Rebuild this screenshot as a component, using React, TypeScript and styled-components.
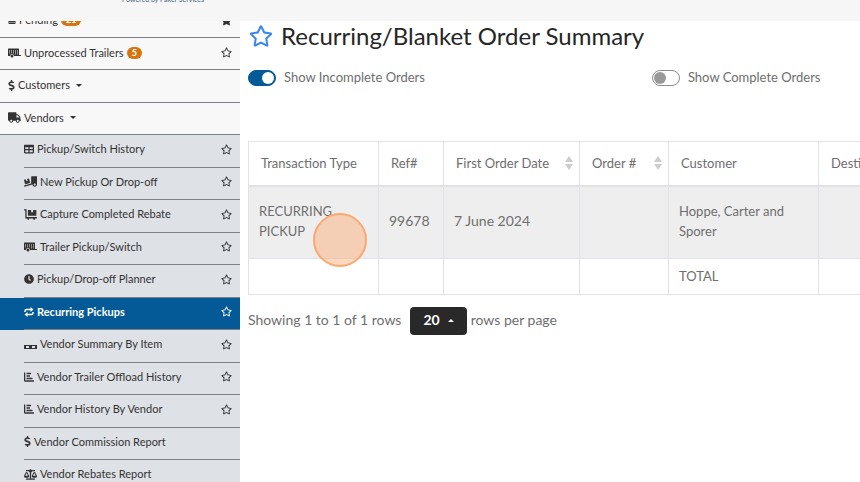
import React from 'react';
import styled, { createGlobalStyle, css } from 'styled-components';
import {
  FaBalanceScale,
  FaCalendarAlt,
  FaClock,
  FaDollarSign,
  FaDollyFlatbed,
  FaRegStar,
  FaStar,
  FaTable,
  FaTruck,
  FaTruckLoading,
} from 'react-icons/fa';

const GlobalStyle = createGlobalStyle`
  *, *::before, *::after { box-sizing: border-box; }
  body {
    margin: 0;
    background: #fff;
    color: #6e6e6e;
    font-family: Lato, "Liberation Sans", sans-serif;
    font-size: 14px;
    line-height: 20px;
  }
`;

const Page = styled.div`
  display: flex;
  flex-direction: column;
  height: 100vh;
  overflow: hidden;
`;

const TopBar = styled.header`
  flex: none;
  display: flex;
  align-items: flex-end;
  height: 21px;
  padding: 0 0 18px 122px;
  overflow: hidden;
  background: #f6f6f6;
`;

const Tagline = styled.span`
  color: #3c5a86;
  font-size: 7px;
  line-height: 8px;
`;

const Body = styled.div`
  flex: 1;
  display: flex;
  min-height: 0;
`;

const Sidebar = styled.nav`
  flex: none;
  width: 240px;
  overflow: hidden;
  background: #f8f8f8;
`;

const MenuList = styled.ul`
  margin: -16px 0 0;
  padding: 0;
  list-style: none;
`;

const SubMenu = styled.ul`
  margin: 0;
  padding: 0;
  list-style: none;
  background: #dee1e6;
`;

const MenuItem = styled.li<{ $nested?: boolean; $active?: boolean }>`
  display: flex;
  height: 32px;
  padding-left: ${(p) => (p.$nested ? 24 : 0)}px;
  color: #333;

  &:nth-child(odd) {
    height: 33px;
  }

  ${(p) =>
    p.$active &&
    css`
      background: #035a96;
      color: #fff;
      font-weight: 700;
    `}
`;

const MenuRow = styled.div<{ $nested?: boolean }>`
  flex: 1;
  display: flex;
  align-items: center;
  justify-content: space-between;
  padding: ${(p) => (p.$nested ? '0 8px 4px 0' : '0 8px 2px 8px')};
  border-bottom: 1px solid #7d8084;
`;

const MenuLink = styled.a`
  display: flex;
  align-items: center;
  gap: 3px;
  color: inherit;
  font-size: 11px;
  line-height: 16px;
  text-decoration: none;
  white-space: nowrap;

  svg {
    flex: none;
  }
`;

const DollarIcon = styled(FaDollarSign)`
  width: 7px;
  height: 11px;
`;

const Badge = styled.span`
  padding: 0 5px;
  border-radius: 6px;
  background: #d6750f;
  color: #fff;
  font-size: 9px;
  font-weight: 700;
  line-height: 12px;
`;

const Caret = styled.span<{ $up?: boolean }>`
  margin-left: 3px;
  border: 3px solid transparent;
  ${(p) =>
    p.$up
      ? css`
          border-top-width: 0;
          border-bottom-color: currentColor;
        `
      : css`
          border-bottom-width: 0;
          border-top-color: currentColor;
        `}
`;

const StarButton = styled.button<{ $large?: boolean }>`
  display: flex;
  padding: 0;
  border: 0;
  background: none;
  color: ${(p) => (p.$large ? '#3d86ec' : 'inherit')};
  font-size: ${(p) => (p.$large ? 24 : 11)}px;
  cursor: pointer;
`;

const Main = styled.main`
  flex: 1;
  min-width: 0;
  padding-left: 8px;
  overflow: hidden;
`;

const TitleRow = styled.div`
  display: flex;
  align-items: center;
  gap: 8px;
  height: 32px;
  padding: 0 0 2px 1px;
`;

const Title = styled.h1`
  margin: 0;
  color: #262626;
  font-size: 24px;
  font-weight: 400;
  line-height: 30px;
`;

const Filters = styled.div`
  display: grid;
  grid-template-columns: 66% 1fr;
  margin: 14px 0 53px;
`;

const SwitchLabel = styled.label`
  display: flex;
  align-items: center;
  gap: 8px;
  font-size: 13px;
`;

const Switch = styled.input`
  appearance: none;
  display: flex;
  align-items: center;
  width: 28px;
  height: 16px;
  margin: 0;
  padding: 0 1px;
  border: 1px solid #8c8c8c;
  border-radius: 8px;
  background: #fff;

  &::before {
    content: '';
    width: 12px;
    height: 12px;
    border-radius: 50%;
    background: #999;
  }

  &:checked {
    justify-content: flex-end;
    border-color: #035a96;
    background: #035a96;
  }

  &:checked::before {
    background: #fff;
  }
`;

const SwitchText = styled.span`
  padding-bottom: 1px;
`;

const TableScroller = styled.div`
  overflow: hidden;
`;

const OrdersTable = styled.table`
  width: 720px;
  table-layout: fixed;
  border-collapse: collapse;
`;

const Column = styled.col<{ $width: number }>`
  width: ${(p) => p.$width}px;
`;

const HeadCell = styled.th`
  height: 44px;
  padding: 0 12px 1px;
  border: 1px solid #dfe2e6;
  border-bottom-width: 2px;
  font-size: 13px;
  font-weight: 400;
  text-align: left;
  white-space: nowrap;
`;

const HeadContent = styled.div`
  display: flex;
  align-items: center;
  justify-content: space-between;
  margin-right: -6px;
`;

const SortIcon = styled.svg`
  flex: none;
  width: 8px;
  height: 14px;
  fill: #cdcdcd;
`;

const BodyRow = styled.tr<{ $shaded?: boolean }>`
  height: ${(p) => (p.$shaded ? 73 : 36)}px;
  background: ${(p) => (p.$shaded ? '#eeeeee' : '#fff')};
`;

const Cell = styled.td<{ $numeric?: boolean }>`
  position: relative;
  padding: 0 10px 2px;
  border: 1px solid #dfe2e6;
  font-size: ${(p) => (p.$numeric ? 14 : 13)}px;
`;

const ClickMarker = styled.span`
  position: absolute;
  top: 26px;
  left: 64px;
  z-index: 1;
  width: 54px;
  height: 54px;
  border: 2px solid #fba870;
  border-radius: 50%;
  background: rgba(251, 168, 112, 0.45);
`;

const Pagination = styled.div`
  display: flex;
  align-items: center;
  gap: 4px;
  margin-top: 12px;
`;

const PageText = styled.span`
  padding-bottom: 2px;
`;

const PageSize = styled.button`
  display: flex;
  align-items: center;
  gap: 5px;
  height: 28px;
  margin-left: 5px;
  padding: 0 13px 2px;
  border: 0;
  border-radius: 4px;
  background: #292929;
  color: #fff;
  font: inherit;
  font-weight: 700;
`;

function TrailerIcon() {
  return (
    <svg width="13" height="10" viewBox="0 0 26 20" fill="currentColor" aria-hidden="true">
      <path
        fillRule="evenodd"
        d="M1 1h20q1 0 1 1v12h4v2H12a4 4 0 0 0-8 0H1q-1 0-1-1V2q0-1 1-1zM3 4v7h1V4zM7 4v7h1V4zM11 4v7h1V4zM15 4v9h1V4zM19 4v9h1V4z"
      />
      <circle cx="8" cy="16" r="3" />
    </svg>
  );
}

function RepeatIcon() {
  return (
    <svg width="10" height="10" viewBox="0 0 20 20" fill="none" stroke="currentColor" aria-hidden="true">
      <path d="M2 10V8q0-3 3-3h9M18 10v2q0 3-3 3H6" strokeWidth="3" />
      <path d="M13 0l6 5-6 5zM7 10l-6 5 6 5z" fill="currentColor" stroke="none" />
    </svg>
  );
}

function PalletIcon() {
  return (
    <svg width="13" height="12" viewBox="0 0 13 12" fill="currentColor" aria-hidden="true">
      <path d="M0 7h13v1H0zM0 10h13v1H0zM0 8h2v2H0zM5 8h3v2H5zM11 8h2v2h-2z" />
    </svg>
  );
}

function BarsIcon() {
  return (
    <svg width="10" height="10" viewBox="0 0 20 20" fill="none" stroke="currentColor" aria-hidden="true">
      <path d="M1 1v15q0 2 2 2h17" strokeWidth="3" />
      <path d="M5 3h9M5 8h7M5 13h12" strokeWidth="3" />
    </svg>
  );
}

type Item = {
  label: string;
  icon: React.ReactNode;
  starred?: 'outline' | 'solid';
  badge?: string;
  caret?: boolean;
  active?: boolean;
};

const topItems: Item[] = [
  { label: 'Pending', icon: <FaCalendarAlt size={8} />, badge: '21', starred: 'solid' },
  { label: 'Unprocessed Trailers', icon: <TrailerIcon />, badge: '5', starred: 'outline' },
  { label: 'Customers', icon: <DollarIcon />, caret: true },
  { label: 'Vendors', icon: <FaTruck size={13} />, caret: true },
];

const vendorItems: Item[] = [
  { label: 'Pickup/Switch History', icon: <FaTable size={10} />, starred: 'outline' },
  { label: 'New Pickup Or Drop-off', icon: <FaTruckLoading size={13} />, starred: 'outline' },
  { label: 'Capture Completed Rebate', icon: <FaDollyFlatbed size={13} />, starred: 'outline' },
  { label: 'Trailer Pickup/Switch', icon: <TrailerIcon />, starred: 'outline' },
  { label: 'Pickup/Drop-off Planner', icon: <FaClock size={10} />, starred: 'outline' },
  { label: 'Recurring Pickups', icon: <RepeatIcon />, starred: 'outline', active: true },
  { label: 'Vendor Summary By Item', icon: <PalletIcon />, starred: 'outline' },
  { label: 'Vendor Trailer Offload History', icon: <BarsIcon />, starred: 'outline' },
  { label: 'Vendor History By Vendor', icon: <BarsIcon />, starred: 'outline' },
  { label: 'Vendor Commission Report', icon: <DollarIcon /> },
  { label: 'Vendor Rebates Report', icon: <FaBalanceScale size={13} /> },
];

function MenuEntry({ item, nested }: { item: Item; nested?: boolean }) {
  return (
    <MenuItem $nested={nested} $active={item.active}>
      <MenuRow $nested={nested}>
        <MenuLink href="#" aria-current={item.active ? 'page' : undefined}>
          {item.icon}
          {item.label}
          {item.badge && <Badge>{item.badge}</Badge>}
          {item.caret && <Caret />}
        </MenuLink>
        {item.starred && (
          <StarButton type="button" aria-label={`Favorite ${item.label}`}>
            {item.starred === 'solid' ? <FaStar /> : <FaRegStar />}
          </StarButton>
        )}
      </MenuRow>
    </MenuItem>
  );
}

const columns = [
  { label: 'Transaction Type', width: 130 },
  { label: 'Ref#', width: 65 },
  { label: 'First Order Date', width: 136, sortable: true },
  { label: 'Order #', width: 89, sortable: true },
  { label: 'Customer', width: 150 },
  { label: 'Destination', width: 150 },
];

export default function App() {
  return (
    <Page>
      <GlobalStyle />
      <TopBar>
        <Tagline>Powered by Paker Services</Tagline>
      </TopBar>
      <Body>
        <Sidebar>
          <MenuList>
            {topItems.map((item) => (
              <MenuEntry key={item.label} item={item} />
            ))}
          </MenuList>
          <SubMenu>
            {vendorItems.map((item) => (
              <MenuEntry key={item.label} item={item} nested />
            ))}
          </SubMenu>
        </Sidebar>
        <Main>
          <TitleRow>
            <StarButton type="button" $large aria-label="Favorite this page">
              <FaRegStar />
            </StarButton>
            <Title>Recurring/Blanket Order Summary</Title>
          </TitleRow>
          <Filters>
            <SwitchLabel>
              <Switch type="checkbox" role="switch" defaultChecked />
              <SwitchText>Show Incomplete Orders</SwitchText>
            </SwitchLabel>
            <SwitchLabel>
              <Switch type="checkbox" role="switch" />
              <SwitchText>Show Complete Orders</SwitchText>
            </SwitchLabel>
          </Filters>
          <TableScroller>
            <OrdersTable>
              <colgroup>
                {columns.map((c) => (
                  <Column key={c.label} $width={c.width} />
                ))}
              </colgroup>
              <thead>
                <tr>
                  {columns.map((c) => (
                    <HeadCell key={c.label} scope="col">
                      <HeadContent>
                        {c.label}
                        {c.sortable && (
                          <SortIcon viewBox="0 0 8 14" aria-hidden="true">
                            <path d="M4 0l4 6H0zM4 14l4-6H0z" />
                          </SortIcon>
                        )}
                      </HeadContent>
                    </HeadCell>
                  ))}
                </tr>
              </thead>
              <tbody>
                <BodyRow $shaded>
                  <Cell>
                    RECURRING PICKUP
                    <ClickMarker />
                  </Cell>
                  <Cell $numeric>99678</Cell>
                  <Cell $numeric>7 June 2024</Cell>
                  <Cell />
                  <Cell>Hoppe, Carter and Sporer</Cell>
                  <Cell />
                </BodyRow>
                <BodyRow>
                  <Cell />
                  <Cell />
                  <Cell />
                  <Cell />
                  <Cell>TOTAL</Cell>
                  <Cell />
                </BodyRow>
              </tbody>
            </OrdersTable>
          </TableScroller>
          <Pagination>
            <PageText>Showing 1 to 1 of 1 rows</PageText>
            <PageSize type="button" aria-haspopup="listbox">
              20
              <Caret $up />
            </PageSize>
            <PageText>rows per page</PageText>
          </Pagination>
        </Main>
      </Body>
    </Page>
  );
}
